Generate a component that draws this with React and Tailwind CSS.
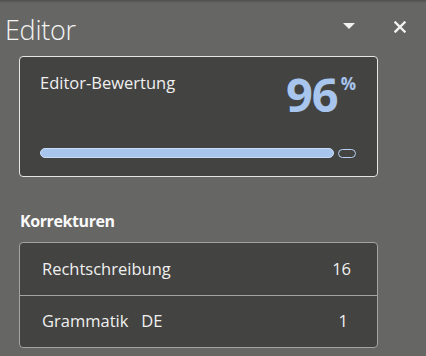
export default function App() {
  return (
    <div
      className="w-[426px] h-[356px] bg-[#666664] text-white overflow-hidden flex flex-col"
      style={{ fontFamily: '"Open Sans", "Noto Sans", sans-serif' }}
    >
      <div className="h-[3px] bg-gradient-to-b from-[#4f4f4d] to-[#666664]" />
      <div className="flex items-center h-[53px] pl-[5px] pr-[20px]">
        <div className="text-[27px] font-light leading-none tracking-[-0.3px] text-[#f4f4f4] -mt-[1px]">Editor</div>
        <div className="flex-1" />
        <svg width="12" height="7" viewBox="0 0 12 7" className="mr-[39px] -mt-[6px]">
          <path d="M0 0 L12 0 L6 6 Z" fill="#f2f2f2" />
        </svg>
        <svg width="12" height="12" viewBox="0 0 12 12" className="-mt-[6px]">
          <path d="M1.5 1.5 L10.5 10.5 M10.5 1.5 L1.5 10.5" stroke="#f2f2f2" strokeWidth="2.4" strokeLinecap="square" />
        </svg>
      </div>
      <div className="ml-[19px] w-[359px] h-[121px] border border-[#e6e6e6] rounded-[4px] bg-[#434341] flex flex-col px-[20px]">
        <div className="flex justify-between items-start mt-[15px]">
          <div className="text-[16.5px] leading-[22px] text-[#f0f0f0]">Editor-Bewertung</div>
          <div className="flex items-start text-[#a8c5ee] font-bold mr-[1px]">
            <span className="text-[47px] leading-none -mt-[1px] tracking-[-1px]">96</span>
            <span className="text-[17px] leading-none ml-[3px] mt-[3px]">%</span>
          </div>
        </div>
        <div className="flex items-center mt-[30px] gap-[4px]">
          <div className="flex-1 h-[10px] rounded-full bg-[#a8c5ee] border border-[#c9dcf6]" />
          <div className="w-[18px] h-[9px] rounded-full border-[1.5px] border-[#b6cff2] mr-[1px]" />
        </div>
      </div>
      <div className="ml-[20px] mt-[34px] text-[16px] font-bold leading-[20px] tracking-[-0.4px] text-[#fafafa]">Korrekturen</div>
      <div className="ml-[19px] mt-[11px] w-[359px] border border-[#a3a3a1] rounded-[4px] bg-[#434341] flex flex-col">
        <div className="h-[53px] flex items-center justify-between pl-[22px] pr-[26px] border-b border-[#a3a3a1] text-[16.5px] text-[#f0f0f0]">
          <span>Rechtschreibung</span>
          <span>16</span>
        </div>
        <div className="h-[51px] flex items-center justify-between pl-[22px] pr-[29px] text-[16.5px] text-[#f0f0f0]">
          <span>Grammatik&nbsp;&nbsp;&nbsp;DE</span>
          <span>1</span>
        </div>
      </div>
    </div>
  );
}
